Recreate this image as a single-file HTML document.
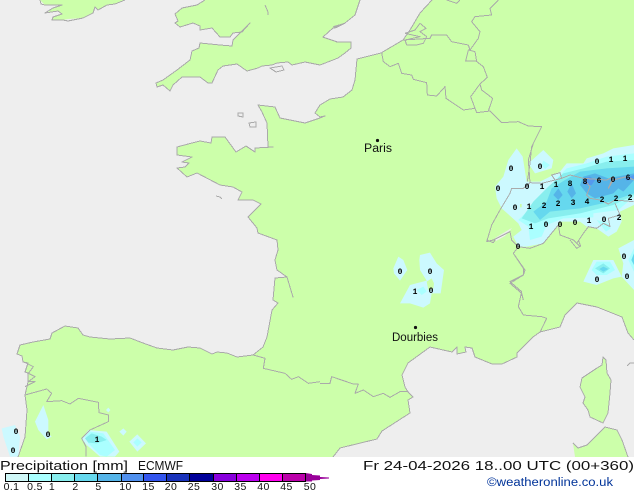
<!DOCTYPE html>
<html><head><meta charset="utf-8"><style>
html,body{margin:0;padding:0;background:#fff;width:634px;height:490px;overflow:hidden}
svg{display:block}
text{font-family:"Liberation Sans",sans-serif}
.g text{font-family:"Liberation Mono",monospace;font-weight:bold;font-size:8px;text-anchor:middle;fill:#000}
.b{fill:none;stroke:#aaa;stroke-width:3;stroke-linejoin:round;shape-rendering:crispEdges}
.c{fill:none;stroke:#aaa;stroke-width:1;stroke-linejoin:round;shape-rendering:crispEdges}
.l text{font-size:10.5px;fill:#111;text-anchor:middle;letter-spacing:.4px}
</style></head><body>
<svg width="634" height="490" viewBox="0 0 634 490" xmlns="http://www.w3.org/2000/svg">
<rect width="634" height="457" fill="#ccffaa"/>
<!-- Atlantic / Channel / North Sea -->
<polygon fill="#eeeeee" points="0,0 205,0 197,5 182,8 175,14 178,21 175,23 180,27 193,23 200,26 200,30 212,28 220,37 230,37 233,33 242,32 250,23 233,40 232,46 220,45 200,43 199,48 192,51 190,60 177,70 163,80 156,83 157,87 163,85 170,91 173,85 182,77 200,77 208,83 212,83 218,70 223,66 237,64 247,71 258,68 262,66 272,65 277,63 288,62 292,65 305,62 320,65 333,60 338,58 345,53 351,48 351,42 337,42 323,37 333,28 345,23 355,15 360,0 432,0 420,13 410,30 403,40 381,53 357,59 355,80 352,90 343,97 330,99 320,105 315,113 320,117 325,116 320,118 305,123 290,120 280,118 275,107 258,105 262,112 267,123 268,147 273,147 255,148 255,152 246,146 236,152 225,137 212,137 211,143 200,141 192,143 177,147 177,155 192,157 182,162 189,163 185,167 177,168 187,177 197,173 220,185 233,187 242,192 238,200 253,200 261,204 248,217 257,228 258,233 277,240 278,250 275,260 277,270 287,277 293,297 287,277 275,278 273,300 278,303 272,310 267,337 263,347 253,355 237,357 227,353 217,352 212,354 200,348 188,347 173,350 157,348 143,343 130,338 110,339 90,337 83,335 78,328 65,326 52,333 50,339 33,342 20,345 17,354 22,356 23,362 28,363 25,372 28,373 28,382 25,395 27,410 25,437 18,457 0,457"/>
<!-- Mediterranean -->
<polygon fill="#eeeeee" points="333,457 340,448 377,439 382,431 410,413 408,400 413,397 408,392 405,387 402,375 408,363 430,347 452,352 457,347 457,354 466,352 465,347 472,348 475,357 492,364 502,364 517,357 517,353 533,337 540,332 560,327 565,315 577,303 597,307 622,317 628,333 634,340 634,457"/>
<!-- Islands -->
<polygon fill="#ccffaa" points="40,0 45,5 62,5 53,8 47,13 58,11 62,14 53,17 52,20 63,20 68,19 83,18 93,13 95,7 98,10 107,5 115,4 125,0"/>
<polygon fill="#ccffaa" points="603,357 606,360 607,373 611,380 610,393 608,413 603,423 590,417 588,410 583,403 585,397 580,387 582,378 597,368 602,365"/>
<polygon fill="#ccffaa" points="573,443 578,448 587,445 605,427 617,430 622,440 628,457 575,457"/>
<!-- Lake Geneva -->
<polygon fill="#eeeeee" points="495,238 510,229 512,228 505,236 496,241"/>

<!-- Precipitation, Alps -->
<g transform="translate(480,130) scale(.33333)">
<polygon fill="#ccf9ff" points="110,55 128,80 140,155 180,155 240,125 260,100 310,100 320,85 370,70 400,55 462,45 462,225 420,245 425,275 410,305 385,320 350,295 320,290 300,275 240,275 215,310 190,340 140,350 115,350 100,320 125,300 115,280 65,235 50,205 45,170 70,140 85,90"/>
<polygon fill="#ccf9ff" points="190,60 220,90 215,115 165,130 145,100"/>
<polygon fill="#aaffff" points="190,92 210,105 195,117 185,105"/>
<polygon fill="#aaffff" points="115,270 135,250 195,190 225,150 260,115 320,100 380,80 462,70 462,200 415,240 340,250 340,262 250,265 200,285 185,320 150,330 145,290"/>
<polygon fill="#aaffff" points="350,270 385,280 392,295 378,305"/>
<polygon fill="#88eeee" points="125,265 160,215 205,170 250,130 310,115 380,95 462,90 462,195 400,225 300,250 205,265 165,280"/>
<polygon fill="#66d8ee" points="160,245 200,215 215,175 255,150 300,125 380,115 462,110 462,190 390,215 300,235 210,245 180,270"/>
<polygon fill="#55b4e8" points="235,175 248,195 235,210 220,195"/>
<polygon fill="#55b4e8" points="275,160 288,190 275,205 262,185"/>
<polygon fill="#55b4e8" points="300,165 310,140 345,130 385,145 462,130 462,150 430,185 415,175 400,190 345,205 320,190"/>
<polygon fill="#5599ee" points="310,145 330,140 345,150 335,165 315,165"/>
<polygon fill="#5599ee" points="435,145 462,135 462,147 440,152"/>
<polygon fill="#ccffaa" points="120,222 125,222 125,232 120,232"/>
</g>

<!-- Precipitation, central/right -->
<g transform="translate(320,240) scale(.33333)">
<polygon fill="#ccf9ff" points="790,125 820,60 880,60 905,110 942,150 942,0 895,25 910,70 905,110 880,115 830,135"/>
<polygon fill="#aaffff" points="815,90 830,65 870,65 885,90 860,105 830,105"/>
<polygon fill="#88eeee" points="825,85 850,70 870,85 850,100"/>
<polygon fill="#66d8ee" points="838,87 850,80 865,87 850,95"/>
<polygon fill="#aaffff" points="942,25 925,60 942,95"/>
<polygon fill="#66d8ee" points="942,40 934,60 942,75"/>
<polygon fill="#ccf9ff" points="220,85 235,50 250,60 262,90 240,122 222,100"/>
<polygon fill="#ccf9ff" points="298,60 300,45 330,38 350,70 372,90 362,160 335,160 330,190 310,203 270,190 240,190 270,135 320,122 300,90"/>
<polygon fill="#ccffaa" points="320,125 335,115 342,130 340,145 325,150"/>
<polygon fill="#aaffff" points="290,150 310,140 320,155 305,165"/>
</g>

<!-- Precipitation, Spain -->
<g transform="translate(0,240) scale(.33333)">
<polygon fill="#ccf9ff" points="5,565 45,555 60,590 55,650 30,650 10,590"/>
<polygon fill="#ccf9ff" points="105,545 130,495 145,540 145,580 155,590 140,598 115,570"/>
<polygon fill="#ccf9ff" points="245,595 265,570 320,575 358,635 345,650 300,650 260,615"/>
<polygon fill="#aaffff" points="255,590 270,575 310,580 345,630 320,650 300,645 265,610"/>
<polygon fill="#88eeee" points="255,595 275,580 305,590 320,600 290,610 265,608"/>
<polygon fill="#ccf9ff" points="358,575 370,565 380,575 370,587"/>
<polygon fill="#ccf9ff" points="388,605 412,583 438,610 412,635"/>
<polygon fill="#aaffff" points="400,607 412,595 425,607 412,620"/>
<polygon fill="#ccf9ff" points="318,510 325,503 331,510 325,517"/>
</g>

<!-- Coastlines -->
<g>
<polyline class="c" points="205,0 197,5 182,8 175,14 178,21 175,23 180,27 193,23 200,26 200,30 212,28 220,37 230,37 233,33 242,32 250,23 233,40 232,46 220,45 200,43 199,48 192,51 190,60 177,70 163,80 156,83 157,87 163,85 170,91 173,85 182,77 200,77 208,83 212,83 218,70 223,66 237,64 247,71 258,68 262,66 272,65 277,63 288,62 292,65 305,62 320,65 333,60 338,58 345,53 351,48 351,42 337,42 323,37 333,28 345,23 355,15 360,0"/>
<polyline class="c" points="432,0 420,13 410,30 403,40 381,53 357,59 355,80 352,90 343,97 330,99 320,105 315,113 320,117 325,116 320,118 305,123 290,120 280,118 275,107 258,105 262,112 267,123 268,147 273,147 255,148 255,152 246,146 236,152 225,137 212,137 211,143 200,141 192,143 177,147 177,155 192,157 182,162 189,163 185,167 177,168 187,177 197,173 220,185 233,187 242,192 238,200 253,200 261,204 248,217 257,228 258,233 277,240 278,250 275,260 277,270 287,277 293,297 287,277 275,278 273,300 278,303 272,310 267,337 263,347 253,355 237,357 227,353 217,352 212,354 200,348 188,347 173,350 157,348 143,343 130,338 110,339 90,337 83,335 78,328 65,326 52,333 50,339 33,342 20,345 17,354 22,356 23,362 28,363 25,372 28,373 28,382 25,395 27,410 25,437 18,457"/>
<polyline class="c" points="333,457 340,448 377,439 382,431 410,413 408,400 413,397 408,392 405,387 402,375 408,363 430,347 452,352 457,347 457,354 466,352 465,347 472,348 475,357 492,364 502,364 517,357 517,353 533,337 540,332 560,327 565,315 577,303 597,307 622,317 628,333 634,340"/>
<polyline class="c" points="40,0 41,4 45,5 62,5 53,8 45,13 58,11 62,14 53,17 52,20 63,20 68,21 83,18 93,13 95,7 98,10 107,5 115,4 125,0"/>
<polygon class="c" points="603,357 606,360 607,373 611,380 610,393 608,413 603,423 590,417 588,410 583,403 585,397 580,387 582,378 597,368 602,365"/>
<polyline class="c" points="573,443 578,448 587,445 605,427 617,430 622,440 628,457"/>
<polyline class="c" points="627,366 630,363 634,363"/>
<polygon class="c" points="238,113 243,113 243,117 238,116"/>
<polygon class="c" points="249,123 256,122 256,127 250,127"/>
<polyline class="c" points="216,196 220,197 222,199"/>
<polygon class="c" points="270,68 282,66 284,70 276,72"/>
<polyline class="c" points="265,5 268,12 268,15"/>
</g>

<!-- Borders, N/E France -->
<g transform="translate(320,0) scale(.33333)">
<polyline class="b" points="185,158 190,185 210,200 235,190 245,220 275,225 280,238 320,248 322,285 350,288 375,260 378,295 430,330 465,325 470,338 510,333 545,368 595,365 625,378 665,380 635,440 630,490 622,545"/>
<polyline class="b" points="465,325 452,290 480,252 485,270 518,295 505,333"/>
<polyline class="b" points="480,252 502,232 490,200 468,183 437,183 445,150 465,155 470,185"/>
<polyline class="b" points="450,150 475,115 480,95 455,65 465,50 515,45 510,25 535,0"/>
<polyline class="b" points="250,120 330,115 335,105 380,105 395,125 445,135 450,150"/>
<polyline class="b" points="255,100 285,90 300,70 318,85 300,95 320,110 310,130 290,135 260,135 255,120 300,110 255,100"/>
<polyline class="b" points="380,0 410,10 420,0"/>
<polyline class="b" points="40,80 75,70 50,82 40,85"/>
<polyline class="b" points="10,112 50,125"/>
</g>

<!-- Borders, Alps -->
<g transform="translate(480,130) scale(.33333)">
<polyline class="b" points="180,0 160,40 145,90 150,158 185,160 225,150 215,135 240,128 245,145 270,135 310,145 330,170 320,195 330,205 360,210 385,222 405,210 460,215"/>
<polyline class="b" points="245,145 225,150"/>
<polyline class="b" points="310,145 380,150 400,140 385,175 400,150 440,140 462,150"/>
<polyline class="b" points="150,158 130,175 95,175 90,190 60,240 35,285 20,335 40,330 90,305 95,330 115,350"/>
<polyline class="b" points="115,350 100,370 135,420 130,435 90,460 125,490 130,510"/>
<polyline class="b" points="115,350 150,355 190,340 235,285 240,315 280,330 300,350 290,340 310,310 325,290 350,295 370,280 390,290 385,265 420,255 405,220"/>
</g>

<!-- Borders, S France -->
<g transform="translate(320,240) scale(.33333)">
<polyline class="b" points="580,40 610,85 610,105 570,125 605,155 595,200 610,225 665,230 680,235 660,277"/>
<polyline class="b" points="0,430 30,430 35,410 100,432 115,432 105,460 130,450 160,470 190,460 210,472 240,455 265,455"/>
<polyline class="b" points="750,0 770,25 782,18 775,0"/>
<polyline class="b" points="500,0 520,8 525,0"/>
</g>

<!-- Spain borders -->
<g transform="translate(0,240) scale(.33333)">
<polyline class="b" points="760,345 795,355 790,385 855,400 875,418 895,410 925,430 960,425"/>
<polyline class="b" points="75,465 140,447 155,460 140,485 185,482 210,492 235,475 295,487 297,518 325,525 325,545 270,570 245,595 258,620 258,650"/>
<polyline class="b" points="70,365 100,380 85,400 105,410 85,425 105,425 75,440"/>
</g>

<!-- Grid values -->
<g class="g">
<text x="511" y="171">0</text><text x="540" y="169">0</text><text x="498" y="191">0</text><text x="527" y="189">0</text>
<text x="542" y="189">1</text><text x="556" y="187">1</text><text x="570" y="186">8</text><text x="585" y="184">8</text>
<text x="599" y="183">6</text><text x="613" y="182">0</text><text x="628" y="180">6</text><text x="597" y="164">0</text>
<text x="611" y="162">1</text><text x="625" y="161">1</text><text x="515" y="210">0</text><text x="529" y="209">1</text>
<text x="544" y="208">2</text><text x="558" y="206">2</text><text x="573" y="205">3</text><text x="587" y="204">4</text>
<text x="602" y="202">2</text><text x="616" y="201">2</text><text x="630" y="200">2</text><text x="531" y="229">1</text>
<text x="546" y="227">0</text><text x="560" y="227">0</text><text x="575" y="225">0</text><text x="589" y="223">1</text>
<text x="604" y="222">0</text><text x="619" y="220">2</text><text x="518" y="249">0</text><text x="624" y="259">0</text>
<text x="597" y="282">0</text><text x="627" y="279">0</text><text x="400" y="274">0</text><text x="430" y="274">0</text>
<text x="415" y="294">1</text><text x="431" y="293">0</text><text x="16" y="434">0</text><text x="48" y="437">0</text>
<text x="13" y="453">0</text><text x="97" y="442">1</text>
</g>

<!-- Cities -->
<circle cx="377.500" cy="140.500" r="1.600" fill="#111"/>
<text x="364" y="152" font-size="11.500" fill="#111" textLength="28" lengthAdjust="spacingAndGlyphs">Paris</text>
<circle cx="415.500" cy="327.500" r="1.600" fill="#111"/>
<text x="392" y="341" font-size="11.500" fill="#111" textLength="46" lengthAdjust="spacingAndGlyphs">Dourbies</text>

<!-- Footer -->
<text x="0" y="470" font-size="12.500" fill="#111" textLength="128" lengthAdjust="spacingAndGlyphs">Precipitation [mm]</text>
<text x="138" y="470" font-size="12.500" fill="#111" textLength="45" lengthAdjust="spacingAndGlyphs">ECMWF</text>
<text x="363" y="470" font-size="12.500" fill="#111" textLength="271" lengthAdjust="spacingAndGlyphs">Fr 24-04-2026 18..00 UTC (00+360)</text>
<text x="487" y="486" font-size="11.500" fill="#003399" textLength="126" lengthAdjust="spacingAndGlyphs">©weatheronline.co.uk</text>

<!-- Legend -->
<g>
<rect x="5" y="473" width="23" height="8.500" fill="#d0f8f8"/>
<rect x="28" y="473" width="23" height="8.500" fill="#aaffff"/>
<rect x="51" y="473" width="23" height="8.500" fill="#88eeee"/>
<rect x="74" y="473" width="23" height="8.500" fill="#66d8ee"/>
<rect x="97" y="473" width="24" height="8.500" fill="#55b4e8"/>
<rect x="121" y="473" width="22" height="8.500" fill="#5090ee"/>
<rect x="143" y="473" width="23" height="8.500" fill="#3355ee"/>
<rect x="166" y="473" width="23" height="8.500" fill="#1a33bb"/>
<rect x="189" y="473" width="24" height="8.500" fill="#000099"/>
<rect x="213" y="473" width="23" height="8.500" fill="#8800dd"/>
<rect x="236" y="473" width="23" height="8.500" fill="#bb00ee"/>
<rect x="259" y="473" width="23" height="8.500" fill="#ff00ee"/>
<rect x="282" y="473" width="23" height="8.500" fill="#bb00aa"/>
<polygon points="305.500,473 312,474 312,475 320,475.500 320,477 329,477.500 329,478.500 320,479 320,480 312,480.500 312,481.500 305.500,481.500" fill="#990099"/>
<rect x="5.500" y="473.500" width="300" height="8" fill="none" stroke="#000" stroke-width="1"/>
<path d="M28.500 473V482M51.500 473V482M74.500 473V482M97.500 473V482M121.500 473V482M143.500 473V482M166.500 473V482M189.500 473V482M213.500 473V482M236.500 473V482M259.500 473V482M282.500 473V482" stroke="#000" stroke-width="1" fill="none"/>
</g>
<g class="l">
<text x="11.500" y="490">0.1</text><text x="35" y="490">0.5</text><text x="52" y="490">1</text><text x="75.500" y="490">2</text>
<text x="98.500" y="490">5</text><text x="125.500" y="490">10</text><text x="148.500" y="490">15</text><text x="171" y="490">20</text>
<text x="194" y="490">25</text><text x="217.500" y="490">30</text><text x="240.500" y="490">35</text><text x="263.500" y="490">40</text>
<text x="286.500" y="490">45</text><text x="310" y="490">50</text>
</g>
</svg>
</body></html>
